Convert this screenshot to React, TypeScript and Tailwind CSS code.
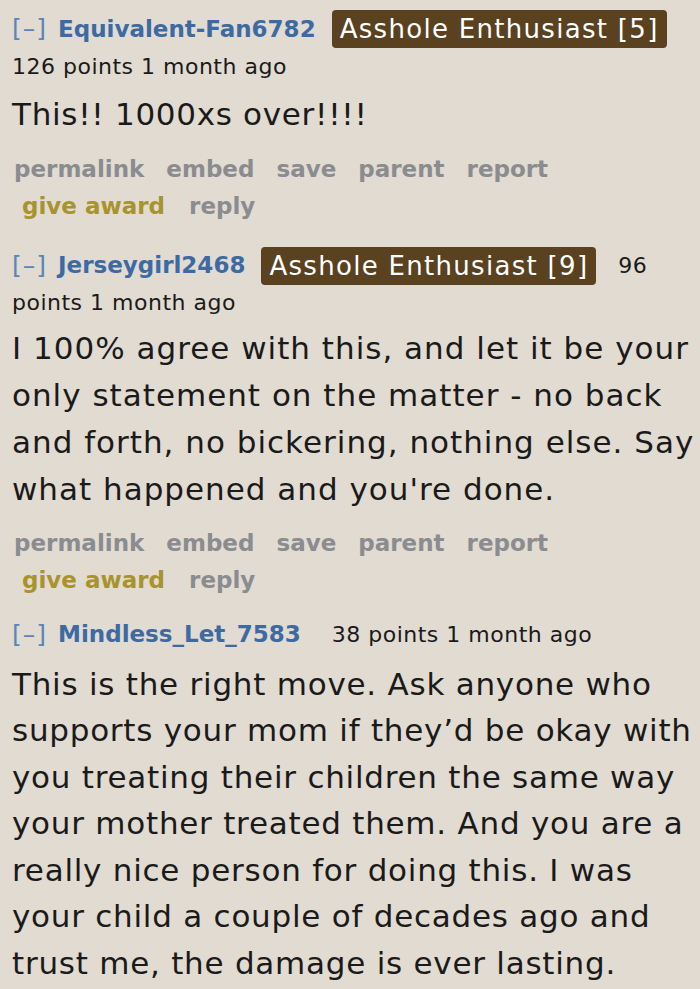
import React from "react";

const Badge = ({ n }: { n: number }) => (
  <span className="inline-flex items-center h-[38px] px-[8px] rounded-[4px] bg-[#5a4220] text-white text-[26px] tracking-[1.3px] leading-none whitespace-nowrap">
    Asshole Enthusiast [{n}]
  </span>
);

const Actions = () => (
  <div className="text-[23px] font-bold leading-[37px] text-[#8a8c8f] whitespace-nowrap">
    <div className="flex gap-[22px] pl-[2px]">
      <span>permalink</span>
      <span>embed</span>
      <span>save</span>
      <span>parent</span>
      <span>report</span>
    </div>
    <div className="flex gap-[24px] pl-[10px]">
      <span className="text-[#a8932c]">give award</span>
      <span>reply</span>
    </div>
  </div>
);

const Who = ({ name }: { name: string }) => (
  <>
    <span className="text-[25px] text-[#5b84b8] mr-[11px] tracking-[1px]">[–]</span>
    <span className="text-[23px] font-bold text-[#3e6aa2] mr-[16px]">{name}</span>
  </>
);

const Body = ({ lines, className = "" }: { lines: string[]; className?: string }) => (
  <div className={"text-[31px] whitespace-nowrap " + className}>
    {lines.map((l, i) => (
      <div key={i}>{l}</div>
    ))}
  </div>
);

export default function App() {
  return (
    <div className="w-[700px] h-[989px] overflow-hidden bg-[#e1dbd2] font-['DejaVu_Sans',Verdana,sans-serif] text-[#1a1a1a]">
      <div className="pl-[12px] pt-[10px]">
        {/* comment 1 */}
        <div className="flex items-center h-[38px]">
          <Who name="Equivalent-Fan6782" />
          <Badge n={5} />
        </div>
        <div className="text-[22px] tracking-[0.5px] leading-[38px]">126 points 1 month ago</div>
        <Body className="mt-[5px] tracking-[0.7px] leading-[46.7px]" lines={["This!! 1000xs over!!!!"]} />
        <div className="mt-[13px]">
          <Actions />
        </div>

        {/* comment 2 */}
        <div className="flex items-center h-[38px] mt-[22px]">
          <Who name="Jerseygirl2468" />
          <Badge n={9} />
          <span className="text-[22px] tracking-[0.5px] ml-[22px]">96</span>
        </div>
        <div className="text-[22px] tracking-[0.5px] leading-[35px]">points 1 month ago</div>
        <Body
          className="mt-[5px] tracking-[1px] leading-[47px]"
          lines={[
            "I 100% agree with this, and let it be your",
            "only statement on the matter - no back",
            "and forth, no bickering, nothing else. Say",
            "what happened and you're done.",
          ]}
        />
        <div className="mt-[12px]">
          <Actions />
        </div>

        {/* comment 3 */}
        <div className="flex items-center h-[38px] mt-[17px]">
          <Who name="Mindless_Let_7583" />
          <span className="text-[22px] tracking-[0.5px] ml-[15px]">38 points 1 month ago</span>
        </div>
        <Body
          className="mt-[7px] tracking-[0.75px] leading-[46.5px]"
          lines={[
            "This is the right move. Ask anyone who",
            "supports your mom if they’d be okay with",
            "you treating their children the same way",
            "your mother treated them. And you are a",
            "really nice person for doing this. I was",
            "your child a couple of decades ago and",
            "trust me, the damage is ever lasting.",
          ]}
        />
      </div>
    </div>
  );
}
